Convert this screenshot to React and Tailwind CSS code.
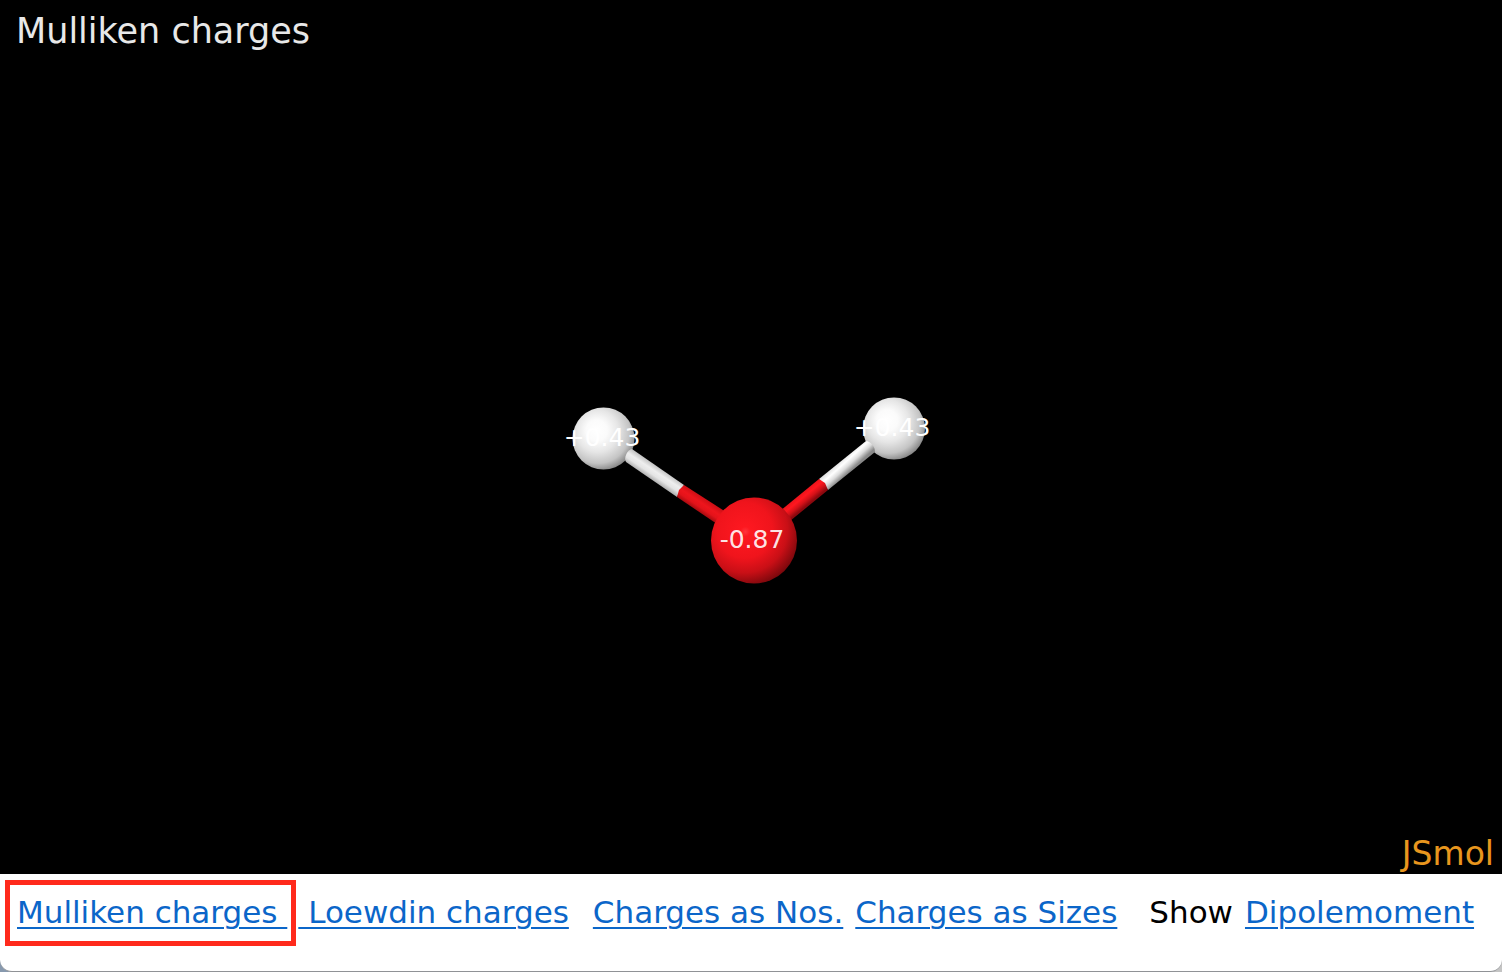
const linkClass =
  "text-[#0b66c9] underline decoration-2 underline-offset-[4px] whitespace-pre";

function Molecule() {
  return (
    <svg
      viewBox="0 0 1502 874"
      className="block w-full"
      role="img"
      aria-label="Water molecule with Mulliken charges"
    >
      <defs>
        <radialGradient id="hydrogen" cx="0.42" cy="0.4" r="0.68" fx="0.38" fy="0.36">
          <stop offset="0" stopColor="#ffffff" />
          <stop offset="0.25" stopColor="#fbfbfb" />
          <stop offset="0.5" stopColor="#e6e6e6" />
          <stop offset="0.75" stopColor="#c4c4c4" />
          <stop offset="1" stopColor="#6c6c6c" />
        </radialGradient>
        <radialGradient id="oxygen" cx="0.38" cy="0.36" r="0.72" fx="0.4" fy="0.4">
          <stop offset="0" stopColor="#ff343c" />
          <stop offset="0.08" stopColor="#fd1820" />
          <stop offset="0.45" stopColor="#f0141c" />
          <stop offset="0.7" stopColor="#c90f16" />
          <stop offset="1" stopColor="#68060a" />
        </radialGradient>
        <linearGradient id="whiteLeft" gradientUnits="userSpaceOnUse" x1="658" y1="467" x2="650" y2="479">
          <stop offset="0" stopColor="#c4c4c4" />
          <stop offset="0.35" stopColor="#eeeeee" />
          <stop offset="0.65" stopColor="#e4e4e4" />
          <stop offset="1" stopColor="#aaaaaa" />
        </linearGradient>
        <linearGradient id="redLeft" gradientUnits="userSpaceOnUse" x1="703" y1="497" x2="695" y2="509">
          <stop offset="0" stopColor="#cc0f15" />
          <stop offset="0.4" stopColor="#ee151c" />
          <stop offset="0.7" stopColor="#e3131a" />
          <stop offset="1" stopColor="#a90b10" />
        </linearGradient>
        <linearGradient id="whiteRight" gradientUnits="userSpaceOnUse" x1="840" y1="460" x2="850" y2="471">
          <stop offset="0" stopColor="#dddddd" />
          <stop offset="0.35" stopColor="#ffffff" />
          <stop offset="0.65" stopColor="#dcdcdc" />
          <stop offset="1" stopColor="#888888" />
        </linearGradient>
        <linearGradient id="redRight" gradientUnits="userSpaceOnUse" x1="797" y1="495" x2="806" y2="506">
          <stop offset="0" stopColor="#e5131a" />
          <stop offset="0.4" stopColor="#ff171f" />
          <stop offset="0.7" stopColor="#d41118" />
          <stop offset="1" stopColor="#8c080e" />
        </linearGradient>
      </defs>
      <circle cx="603.5" cy="438.5" r="31" fill="url(#hydrogen)" />
      <circle cx="894" cy="428.5" r="31" fill="url(#hydrogen)" />
      <path d="M632 449 L684 485 L677 497 L626 462 C623 458 628 449 632 449Z" fill="url(#whiteLeft)" />
      <path d="M684 485 L726 512 L717 524 L677 497 L679 490Z" fill="url(#redLeft)" />
      <path d="M866 441 L819 479 L828 490 L875 452 C875 446 870 441 866 441Z" fill="url(#whiteRight)" />
      <path d="M819 479 L780 511 L790 521 L828 490 L825 483Z" fill="url(#redRight)" />
      <circle cx="754" cy="540.5" r="43" fill="url(#oxygen)" />
      <g fill="#ffffff" fontSize="25" textAnchor="middle" fontFamily="'DejaVu Sans', sans-serif">
        <text x="602" y="446">+0.43</text>
        <text x="892" y="436">+0.43</text>
        <text x="752" y="548" fillOpacity="0.9">-0.87</text>
      </g>
    </svg>
  );
}

export default function App() {
  return (
    <div className="flex min-h-screen flex-col bg-black font-['DejaVu_Sans',sans-serif]">
      <main className="relative flex flex-1 flex-col justify-center leading-10">
        <Molecule />
        <h1 className="absolute top-[11px] left-4 text-[35px] text-[#e8e8e8]">Mulliken charges</h1>
        <span className="absolute right-2 bottom-0 text-[33px] text-[#e8961e]">JSmol</span>
      </main>
      <div className="bg-linear-to-r from-[#8799ae] from-50% to-[#c4c4c4] to-50%">
        <nav
          aria-label="Charge display"
          className="flex items-baseline rounded-b-[12px] border-b border-[#909296] bg-white px-[5px] pt-1.5 pb-[25px] text-[31px] leading-[54px] text-black"
        >
          <span className="border-[5px] border-[#ff2a1c] pr-1 pb-0.5 pl-[7px]">
            <a href="#mulliken" className={linkClass}>{"Mulliken charges\u00a0"}</a>
          </span>
          <a href="#loewdin" className={`${linkClass} ml-0.5`}>{"\u00a0Loewdin charges"}</a>
          <a href="#numbers" className={`${linkClass} ml-6`}>Charges as Nos.</a>
          <a href="#sizes" className={`${linkClass} ml-3`}>Charges as Sizes</a>
          <span className="ml-8">Show</span>
          <a href="#dipole" className={`${linkClass} ml-3`}>Dipolemoment</a>
        </nav>
      </div>
    </div>
  );
}
